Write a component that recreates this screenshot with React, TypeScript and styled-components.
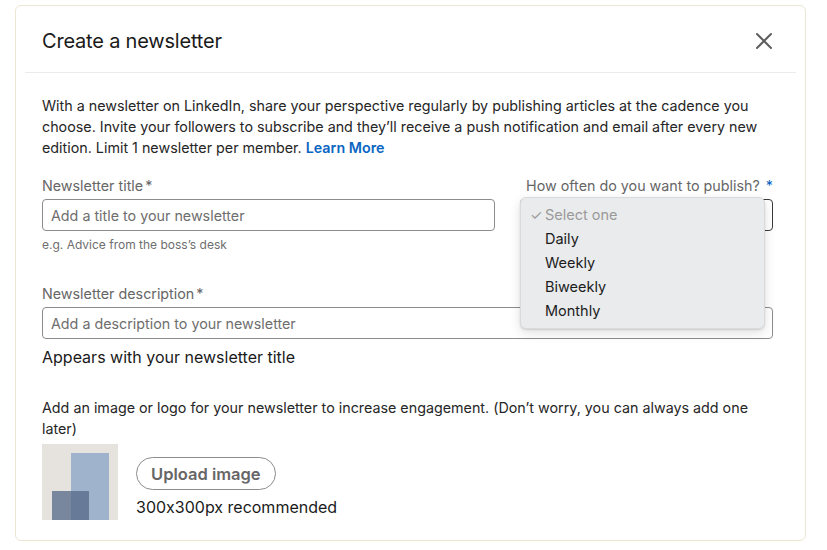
import React from 'react';
import styled, { createGlobalStyle } from 'styled-components';

const GlobalStyle = createGlobalStyle`
  html, body {
    margin: 0;
    padding: 0;
    background: #ffffff;
  }
  body {
    font-family: Inter, "Noto Sans", "Liberation Sans", sans-serif;
    font-feature-settings: "calt" 0;
    color: #1f1f1f;
  }
`;

const frequencies = ['Daily', 'Weekly', 'Biweekly', 'Monthly'];

const Page = styled.div`
  padding: 5px 20px 9px 15px;
`;

const Card = styled.div`
  width: 791px;
  height: 536px;
  box-sizing: border-box;
  border: 1px solid #ebe7d3;
  border-radius: 6px;
  padding: 0 9px;
  overflow: hidden;
`;

const Header = styled.div`
  height: 67px;
  box-sizing: border-box;
  display: flex;
  align-items: center;
  justify-content: space-between;
  padding: 4px 23px 0 17px;
  border-bottom: 1px solid #ebebeb;
`;

const Title = styled.h2`
  margin: 0;
  font-size: 20px;
  font-weight: 400;
  color: #1a1a1a;
  letter-spacing: -0.2px;
`;

const CloseButton = styled.button`
  border: none;
  background: transparent;
  padding: 0;
  width: 18px;
  height: 18px;
  display: flex;
  cursor: pointer;
`;

const Body = styled.div`
  padding: 22px 23px 0 17px;
`;

const Intro = styled.p`
  margin: 0;
  font-size: 14.3px;
  line-height: 21px;
  color: #262626;
`;

const Link = styled.a`
  color: #0a66c2;
  font-weight: 600;
  text-decoration: none;
`;

const Row = styled.div`
  display: flex;
  gap: 25px;
  margin-top: 18px;
`;

const Field = styled.div<{ $width?: number }>`
  position: relative;
  display: flex;
  flex-direction: column;
  width: ${(p) => (p.$width ? `${p.$width}px` : 'auto')};
  flex: ${(p) => (p.$width ? 'none' : '1')};
`;

const Label = styled.label<{ $right?: boolean }>`
  font-size: 14.3px;
  line-height: 20px;
  color: #666666;
  margin-bottom: 3px;
  white-space: nowrap;
  text-align: ${(p) => (p.$right ? 'right' : 'left')};
`;

const Star = styled.span<{ $blue?: boolean }>`
  color: ${(p) => (p.$blue ? '#0a66c2' : '#666666')};
  margin-left: 2px;
`;

const Input = styled.input`
  box-sizing: border-box;
  height: 32px;
  border: 1px solid #8c8c8c;
  border-radius: 4px;
  padding: 0 8px;
  font-family: inherit;
  font-feature-settings: "calt" 0;
  font-size: 14.3px;
  color: #1f1f1f;
  outline: none;

  &::placeholder {
    color: #6e6e6e;
  }
`;

const Hint = styled.div`
  font-size: 12px;
  line-height: 16px;
  color: #6e6e6e;
  margin-top: 6px;
`;

const SelectBox = styled.div`
  box-sizing: border-box;
  height: 32px;
  border: 1.5px solid #3a3a3a;
  border-radius: 4px;
`;

const Menu = styled.ul`
  position: absolute;
  z-index: 10;
  top: 21px;
  left: 0;
  width: 245px;
  margin: 0;
  padding: 5px 0;
  list-style: none;
  background: #e9ebec;
  border-radius: 6px;
  box-shadow: 0 1px 2px rgba(0, 0, 0, 0.12), 0 4px 12px rgba(0, 0, 0, 0.12);
  border: 1px solid #d8dadb;
  box-sizing: border-box;
`;

const MenuItem = styled.li<{ $muted?: boolean }>`
  position: relative;
  height: 24px;
  line-height: 24px;
  padding-left: 24px;
  font-size: 14.5px;
  color: ${(p) => (p.$muted ? '#9a9a9a' : '#1c1c1c')};
`;

const Check = styled.span`
  position: absolute;
  left: 9px;
  color: #9a9a9a;
  font-size: 14px;
`;

const Section = styled.div`
  margin-top: 31px;
`;

const Note = styled.div`
  font-size: 16px;
  line-height: 22px;
  color: #1a1a1a;
  margin-top: 7px;
`;

const ImageNote = styled.p`
  margin: 29px 0 0;
  font-size: 14.3px;
  line-height: 21px;
  color: #262626;
`;

const UploadRow = styled.div`
  display: flex;
  align-items: flex-start;
  gap: 18px;
  margin-top: 5px;
`;

const Thumb = styled.div`
  position: relative;
  width: 76px;
  height: 76px;
  background: #e6e3df;
  overflow: hidden;
`;

const Block = styled.div<{ $x: number; $y: number; $w: number; $color: string }>`
  position: absolute;
  left: ${(p) => p.$x}px;
  top: ${(p) => p.$y}px;
  width: ${(p) => p.$w}px;
  bottom: 0;
  background: ${(p) => p.$color};
`;

const UploadInfo = styled.div`
  display: flex;
  flex-direction: column;
  align-items: flex-start;
  padding-top: 13px;
`;

const UploadButton = styled.button`
  height: 33px;
  padding: 0 14px;
  border: 1px solid #8c8c8c;
  border-radius: 17px;
  background: #ffffff;
  font-family: inherit;
  font-size: 16.5px;
  font-weight: 600;
  color: #666666;
  cursor: pointer;
`;

const Recommended = styled.div`
  font-size: 16px;
  line-height: 22px;
  color: #1a1a1a;
  margin-top: 6px;
`;

const CloseIcon = () => (
  <svg width="18" height="18" viewBox="0 0 18 18">
    <path d="M2 2 L16 16 M16 2 L2 16" stroke="#5e5e5e" strokeWidth="2" strokeLinecap="round" />
  </svg>
);

const App = () => {
  return (
    <Page>
      <GlobalStyle />
      <Card>
        <Header>
          <Title>Create a newsletter</Title>
          <CloseButton aria-label="Close">
            <CloseIcon />
          </CloseButton>
        </Header>
        <Body>
          <Intro>
            With a newsletter on LinkedIn, share your perspective regularly by publishing articles at the cadence you
            choose. Invite your followers to subscribe and they’ll receive a push notification and email after every new
            edition. Limit 1 newsletter per member. <Link href="#">Learn More</Link>
          </Intro>

          <Row>
            <Field $width={453}>
              <Label>
                Newsletter title<Star>*</Star>
              </Label>
              <Input placeholder="Add a title to your newsletter" />
              <Hint>e.g. Advice from the boss’s desk</Hint>
            </Field>
            <Field>
              <Label $right>
                How often do you want to publish? <Star $blue>*</Star>
              </Label>
              <SelectBox />
              <Menu>
                <MenuItem $muted>
                  <Check>✓</Check>Select one
                </MenuItem>
                {frequencies.map((f) => (
                  <MenuItem key={f}>{f}</MenuItem>
                ))}
              </Menu>
            </Field>
          </Row>

          <Section>
            <Field>
              <Label>
                Newsletter description<Star>*</Star>
              </Label>
              <Input placeholder="Add a description to your newsletter" />
            </Field>
            <Note>Appears with your newsletter title</Note>
          </Section>

          <ImageNote>
            Add an image or logo for your newsletter to increase engagement. (Don’t worry, you can always add one
            later)
          </ImageNote>
          <UploadRow>
            <Thumb>
              <Block $x={29} $y={9} $w={38} $color="#9fb3cc" />
              <Block $x={10} $y={47} $w={37} $color="rgba(84, 104, 136, 0.75)" />
            </Thumb>
            <UploadInfo>
              <UploadButton>Upload image</UploadButton>
              <Recommended>300x300px recommended</Recommended>
            </UploadInfo>
          </UploadRow>
        </Body>
      </Card>
    </Page>
  );
};

export default App;
